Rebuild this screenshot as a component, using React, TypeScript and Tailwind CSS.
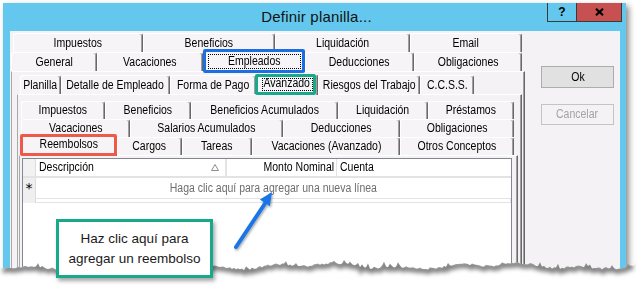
import React from "react";

const UI = "font-['Liberation_Sans',Arial,sans-serif]";

const TAB =
  "relative shrink-0 flex items-center justify-center bg-[#f6f4f6] border-t border-l border-r border-t-white border-l-white border-r-[#696969] shadow-[inset_-1px_0_0_#a0a0a0] rounded-t-[3px] whitespace-nowrap text-[12.5px] leading-none text-black";

const NARROW = "inline-block whitespace-nowrap scale-x-[0.84]";

function Tab({
  label,
  w,
  h,
  extra = "",
  children,
}: {
  label: string;
  w: string;
  h: string;
  extra?: string;
  children?: React.ReactNode;
}) {
  return (
    <div className={`${TAB} ${w} ${h} ${extra}`}>
      <span className={`${NARROW} origin-center`}>{label}</span>
      {children}
    </div>
  );
}

function buildEdge() {
  let s = 4711;
  const r = () => {
    s = (s * 16807) % 2147483647;
    return s / 2147483647;
  };
  const pts: [number, number][] = [];
  for (let x = 0; x <= 640; x += 2) {
    let y =
      266 +
      2 * Math.sin(x / 29) +
      1.4 * Math.sin(x / 9.7 + 1.3) +
      (r() - 0.5) * 2.4;
    if (r() < 0.12) y -= 2 + r() * 3;
    pts.push([x, +y.toFixed(1)]);
  }
  return pts;
}

const EDGE = buildEdge();
const FILL_D = `M0,291 L${EDGE.map((p) => `${p[0]},${p[1]}`).join(" L")} L640,291 Z`;
const EDGE_D =
  "M" +
  EDGE.filter((p) => p[0] >= 2 && p[0] <= 632)
    .map((p) => `${p[0]},${p[1]}`)
    .join(" L");

const PANEL =
  "border-t border-t-white border-l border-l-[#a9a9a9] border-r border-r-[#696969] shadow-[inset_-1px_0_0_#a0a0a0]";

export default function App() {
  return (
    <div className={`relative w-[638px] h-[291px] bg-white overflow-hidden ${UI}`}>
      {/* Window */}
      <div className="ml-[3px] mt-[3px] w-[623px] h-[284px] bg-[#64c8ee] flex flex-col shadow-[3px_3px_6px_rgba(0,0,0,0.45)]">
        {/* Title bar */}
        <div className="relative h-[28px] shrink-0">
          <div className="pt-[4px] pl-[4px] text-center text-[15px] leading-[20px] tracking-[0.2px] text-[#111]">
            Definir planilla...
          </div>
          <div className="absolute right-[4px] top-0 flex">
            <div className="w-[29px] h-[19px] border-l border-b border-[#3a3a3a] flex items-center justify-center text-[12px] font-bold text-black">
              ?
            </div>
            <div className="w-[46px] h-[19px] bg-[#c75050] border-l border-r border-b border-[#3a3a3a] flex items-center justify-center">
              <svg width="9" height="8" viewBox="0 0 9 8">
                <path d="M1 0.8 L8 7.2 M8 0.8 L1 7.2" stroke="#000" strokeWidth="2.2" />
              </svg>
            </div>
          </div>
        </div>

        {/* Client area */}
        <div className="ml-[7px] mr-[6px] flex-1 bg-[#f5f2f5] flex">
          {/* Tab control 1 */}
          <div className="ml-[1px] w-[514px] pt-[2px] flex flex-col">
            <div className="flex ml-[2px] h-[19px]">
              <Tab label="Impuestos" w="w-[130px]" h="h-[19px]" />
              <Tab label="Beneficios" w="w-[132px]" h="h-[19px]" />
              <Tab label="Liquidación" w="w-[135px]" h="h-[19px]" />
              <Tab label="Email" w="w-[112px]" h="h-[19px]" />
            </div>
            <div className="flex h-[19px] items-end">
              <Tab label="General" w="w-[86px]" h="h-[19px]" />
              <Tab label="Vacaciones" w="w-[106px]" h="h-[19px]" />
              <Tab label="Empleados" w="w-[102px]" h="h-[21px]" extra="z-10 -mb-[1px] pb-[2px]">
                <div className="absolute left-[4px] right-[3px] top-[2px] bottom-[3px] border border-dotted border-black" />
                <div className="absolute -left-[1px] -right-[1px] -top-[3px] -bottom-[1px] border-[3px] border-[#1b6fe2] rounded-[2px]" />
              </Tab>
              <Tab label="Deducciones" w="w-[109px]" h="h-[19px]" />
              <Tab label="Obligaciones" w="w-[108px]" h="h-[19px]" />
            </div>

            {/* Panel 1 */}
            <div className={`flex-1 ${PANEL} pt-[3px] flex flex-col`}>
              <div className="ml-[5px] w-[505px] flex-1 flex flex-col">
                <div className="flex pl-[3px] h-[19px] items-end">
                  <Tab label="Planilla" w="w-[41px]" h="h-[19px]" />
                  <Tab label="Detalle de Empleado" w="w-[109px]" h="h-[19px]" />
                  <Tab label="Forma de Pago" w="w-[86px]" h="h-[19px]" />
                  <Tab label="Avanzado" w="w-[62px]" h="h-[21px]" extra="z-10 -mb-[1px] pb-[3px]">
                    <div className="absolute left-[5px] right-[4px] top-[3px] bottom-[4px] border border-dotted border-black" />
                    <div className="absolute -left-[2px] right-[1px] -top-[1px] bottom-0 border-[3px] border-[#17a98b] rounded-[2px]" />
                  </Tab>
                  <Tab label="Riesgos del Trabajo" w="w-[102px]" h="h-[19px]" />
                  <Tab label="C.C.S.S." w="w-[54px]" h="h-[19px]" />
                </div>

                {/* Panel 2 */}
                <div className={`flex-1 ${PANEL} pt-[6px] flex flex-col`}>
                  <div className="ml-[1px] w-[499px] flex-1 flex flex-col">
                    <div className="flex ml-[2px] h-[18px]">
                      <Tab label="Impuestos" w="w-[84px]" h="h-[18px]" />
                      <Tab label="Beneficios" w="w-[86px]" h="h-[18px]" />
                      <Tab label="Beneficios Acumulados" w="w-[147px]" h="h-[18px]" />
                      <Tab label="Liquidación" w="w-[90px]" h="h-[18px]" />
                      <Tab label="Préstamos" w="w-[86px]" h="h-[18px]" />
                    </div>
                    <div className="flex ml-[2px] h-[18px]">
                      <Tab label="Vacaciones" w="w-[109px]" h="h-[18px]" />
                      <Tab label="Salarios Acumulados" w="w-[153px]" h="h-[18px]" />
                      <Tab label="Deducciones" w="w-[117px]" h="h-[18px]" />
                      <Tab label="Obligaciones" w="w-[114px]" h="h-[18px]" />
                    </div>
                    <div className="flex ml-[2px] h-[18px] items-end">
                      <Tab label="Reembolsos" w="w-[96px]" h="h-[20px]" extra="z-10 -mb-[1px] pb-[4px]">
                        <div className="absolute -left-[2px] -right-[1px] -top-[3px] bottom-0 border-[3px] border-[#ee5a4a] rounded-[2px]" />
                      </Tab>
                      <Tab label="Cargos" w="w-[65px]" h="h-[18px]" />
                      <Tab label="Tareas" w="w-[70px]" h="h-[18px]" />
                      <Tab label="Vacaciones (Avanzado)" w="w-[148px]" h="h-[18px]" />
                      <Tab label="Otros Conceptos" w="w-[114px]" h="h-[18px]" />
                    </div>

                    {/* Panel 3 */}
                    <div className={`flex-1 ${PANEL} pt-[2px] flex flex-col`}>
                      {/* Grid */}
                      <div className="ml-[2px] w-[490px] flex-1 bg-white border border-[#828790] flex flex-col text-[12.5px] leading-none text-black">
                        <div className="flex h-[19px] border-b-2 border-b-[#e3e3e3]">
                          <div className="w-[13px] bg-[#f3f2f3] border-r border-r-[#dcdcdc]" />
                          <div className="w-[191px] relative flex items-center pl-[3px] border-r-2 border-r-[#e3e3e3]">
                            <span className={`${NARROW} origin-left`}>Descripción</span>
                            <svg
                              className="absolute right-[6px] top-[5px]"
                              width="8"
                              height="7"
                              viewBox="0 0 8 7"
                            >
                              <polygon points="4,0.5 7.5,6.5 0.5,6.5" fill="none" stroke="#8c8c8c" />
                            </svg>
                          </div>
                          <div className="w-[110px] flex items-center justify-end pr-[2px] border-r border-r-[#e3e3e3]">
                            <span className={`${NARROW} origin-right`}>Monto Nominal</span>
                          </div>
                          <div className="flex-1 flex items-center pl-[3px]">
                            <span className={`${NARROW} origin-left`}>Cuenta</span>
                          </div>
                        </div>
                        <div className="flex h-[20px]">
                          <div className="w-[13px] bg-[#f0eff0] border-r border-r-[#dcdcdc] flex items-center justify-center text-[14px] font-['DejaVu_Sans',sans-serif]">
                            *
                          </div>
                          <div className="flex-1 flex items-center justify-center text-[#6e6e6e]">
                            <span className={`${NARROW} origin-center`}>
                              Haga clic aquí para agregar una nueva línea
                            </span>
                          </div>
                        </div>
                        <div className="flex h-[5px]">
                          <div className="w-[13px] bg-[#f0eff0] border-r border-r-[#dcdcdc]" />
                          <div className="flex-1 border-y border-r border-[#e3e3e3]" />
                        </div>
                      </div>
                    </div>
                  </div>
                </div>
              </div>
            </div>
          </div>

          {/* Buttons */}
          <div className="ml-[16px] w-[73px] flex flex-col">
            <div className="mt-[35px] h-[22px] bg-[#e1e1e1] border border-[#adadad] flex items-center justify-center text-[12.5px] leading-none text-black">
              <span className={`${NARROW} origin-center`}>Ok</span>
            </div>
            <div className="mt-[16px] h-[21px] bg-[#f4f2f4] border border-[#c4c4c4] flex items-center justify-center text-[12.5px] leading-none text-[#a3a3a3]">
              <span className={`${NARROW} origin-center`}>Cancelar</span>
            </div>
          </div>
        </div>
      </div>

      {/* Torn edge */}
      <svg className="absolute left-0 top-0 pointer-events-none" width="638" height="291">
        <defs>
          <clipPath id="belowEdge">
            <path d={FILL_D} />
          </clipPath>
          <filter id="edgeBlur" x="-5%" y="-100%" width="110%" height="300%">
            <feGaussianBlur stdDeviation="2" />
          </filter>
        </defs>
        <path d={FILL_D} fill="#ffffff" />
        <g clipPath="url(#belowEdge)">
          <path
            d={EDGE_D}
            transform="translate(1,1.5)"
            fill="none"
            stroke="rgba(0,0,0,0.5)"
            strokeWidth="6"
            filter="url(#edgeBlur)"
          />
        </g>
      </svg>

      {/* Arrow */}
      <svg className="absolute left-0 top-0 pointer-events-none" width="638" height="291">
        <defs>
          <filter id="arrowShadow" x="-50%" y="-50%" width="200%" height="200%">
            <feDropShadow dx="1" dy="1.5" stdDeviation="1" floodOpacity="0.35" />
          </filter>
        </defs>
        <g filter="url(#arrowShadow)">
          <line x1="236" y1="247" x2="266" y2="202" stroke="#1c74e6" strokeWidth="4" strokeLinecap="round" />
          <polygon points="272,192 259.9,199.6 269.9,206.2" fill="#1c74e6" />
        </g>
      </svg>

      {/* Callout */}
      <div className="absolute left-[56px] top-[219px] w-[157px] h-[59px] bg-white border-[3px] border-[#17a98b] shadow-[2px_3px_4px_rgba(0,0,0,0.35)] flex flex-col items-center justify-center text-[13.5px] leading-[20px] text-[#1a1a1a]">
        <div>Haz clic aquí para</div>
        <div>agregar un reembolso</div>
      </div>
    </div>
  );
}
